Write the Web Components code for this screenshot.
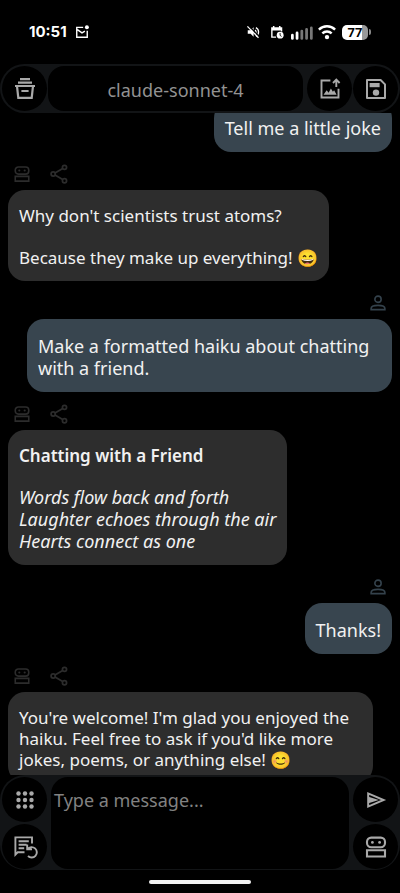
<!DOCTYPE html>
<html lang="en">
<head>
<meta charset="utf-8">
<meta name="viewport" content="width=device-width, initial-scale=1">
<title>Chat</title>
<style>
  html, body { height: 100%; }
  body { margin: 0; background: #000; color: #f1f1f1; font: 18px/22px "Noto Sans", sans-serif; }
</style>
</head>
<body>
<chat-app></chat-app>

<script>
const ICONS = {
  archive: '<path fill="none" stroke="currentColor" stroke-width="2.2" d="M2 9h20M4 9.2l1.3 11.7h13.4L20 9.2M5 5.6h14M7 2.2h10M8.4 14h7.2"/>',
  image: '<path fill="none" stroke="currentColor" stroke-width="1.9" d="M12.4 3.5H3.5v17h17v-8.7M18.3 10V3M15 6l3.3-3.3L21.6 6"/><path fill="currentColor" d="M5.5 17.8l3.2-4.6 1.9 2.6 2.3-4.2 2 3.1 1.2-1.5 2.5 4.6z"/>',
  save: '<path fill="none" stroke="currentColor" stroke-width="2" stroke-linejoin="round" d="M3 3h13.6L21 7.4V21H3z"/><path fill="currentColor" d="M5.6 6h10v4.2h-10z"/><circle cx="12" cy="15.6" r="3.2" fill="currentColor"/>',
  bot: '<path fill="none" stroke="currentColor" stroke-width="2.1" d="M3 15.2h18v6.3H3zM7.2 2.6h9.6a4.200 4.200 0 0 1 4.200 4.200v1.200a4.200 4.200 0 0 1-4.200 4.200H7.200A4.200 4.200 0 0 1 3 8V6.800a4.200 4.200 0 0 1 4.200-4.200z"/><circle cx="8.4" cy="7.4" r="1.4" fill="currentColor"/><circle cx="15.6" cy="7.4" r="1.4" fill="currentColor"/>',
  share: '<g fill="none" stroke="currentColor" stroke-width="2.1"><circle cx="18.6" cy="4" r="2.5"/><circle cx="5" cy="12" r="2.5"/><circle cx="18.6" cy="20" r="2.5"/><path d="M7.2 10.7l9.2-5.4M7.2 13.3l9.2 5.4"/></g>',
  person: '<g fill="none" stroke="currentColor" stroke-width="2.1"><circle cx="12" cy="7" r="4.2"/><path d="M2.8 20.8v-1.5c0-2.6 4.6-4.1 9.2-4.1s9.2 1.5 9.2 4.1v1.5z"/></g>',
  apps: '<g fill="currentColor"><circle cx="5.5" cy="5.5" r="2.2"/><circle cx="12" cy="5.5" r="2.2"/><circle cx="18.5" cy="5.5" r="2.2"/><circle cx="5.5" cy="12" r="2.2"/><circle cx="12" cy="12" r="2.2"/><circle cx="18.5" cy="12" r="2.2"/><circle cx="5.5" cy="18.5" r="2.2"/><circle cx="12" cy="18.5" r="2.2"/><circle cx="18.5" cy="18.5" r="2.2"/></g>',
  undo: '<path fill="none" stroke="currentColor" stroke-width="1.9" d="M19 8.5V2.4H2.4v17.2l2.3-2.3h6.8M5.6 6.2h10.2M5.6 9.7h8M5.6 13.2h5.6M14.2 9.4v4.8h4.8M14.6 14a5.2 5.2 0 1 1 .4 7"/>',
  send: '<path fill="none" stroke="currentColor" stroke-width="2" d="M4.2 5.4v13.2L19.6 12zM4.4 12h7M4.2 9.8l7.2 2.2-7.2 2.2"/>',
  mail: '<path fill="none" stroke="currentColor" stroke-width="2.4" d="M14 4H3v17h18V10M4 8l8 5.6 5-3"/><circle cx="20.4" cy="4" r="3.4" fill="currentColor"/>',
  mute: '<path fill="currentColor" d="M3 9h5l5-5v16l-5-5H3z"/><path fill="none" stroke="currentColor" stroke-width="2.2" d="M15.5 8.5a5 5 0 0 1 0 7M17 4.4a8.6 8.6 0 0 1 0 15.2"/><path stroke="#000" stroke-width="2.4" d="M4.6 1.2l18 18.4"/><path stroke="currentColor" stroke-width="2.2" d="M2.4 2.4l19 19.4"/>',
  calendar: '<path fill="currentColor" d="M2 4h3V1.5h2.6V4h7.8V1.5H18V4h3v7h-2.4V9.6H4.4v10.2h6V22H2z"/><circle cx="17.4" cy="17.4" r="5.9" fill="currentColor"/><path fill="none" stroke="#000" stroke-width="1.5" d="M17.3 13.8v4l2.5 1.8"/>',
  wifi: '<g fill="none" stroke="currentColor" stroke-width="3.2"><path d="M1.2 8.8a15.4 15.4 0 0 1 21.6 0"/><path d="M5.8 13.8a8.9 8.9 0 0 1 12.4 0"/></g><circle cx="12" cy="18.8" r="2.9" fill="currentColor"/>',
  signal: '<path stroke="currentColor" stroke-width="3" stroke-linecap="round" d="M1.5 15.5v3.5M6.6 13v6"/><path stroke="#777" stroke-width="3" stroke-linecap="round" d="M11.8 11v8M17 9v10M22.2 7.5V19"/>'
};

class UiIcon extends HTMLElement {
  connectedCallback() {
    const root = this.attachShadow({ mode: 'open' });
    root.innerHTML = `
      <style>
        :host { display: inline-flex; flex: none; width: var(--icon, 24px); height: var(--icon, 24px); }
        svg { width: 100%; height: 100%; overflow: visible; }
      </style>
      <svg viewBox="0 0 24 24" aria-hidden="true">${ICONS[this.getAttribute('name')]}</svg>`;
  }
}
customElements.define('ui-icon', UiIcon);

class RoundButton extends HTMLElement {
  connectedCallback() {
    const root = this.attachShadow({ mode: 'open' });
    root.innerHTML = `
      <style>
        :host { display: block; flex: none; }
        button { display: grid; place-items: center; width: 45px; height: 45px; padding: 0; border: 0;
          border-radius: 50%; background: #000; color: #a9a9a9; cursor: pointer; }
      </style>
      <button type="button" aria-label="${this.getAttribute('label')}"><ui-icon name="${this.getAttribute('icon')}"></ui-icon></button>`;
  }
}
customElements.define('round-button', RoundButton);

class StatusBar extends HTMLElement {
  connectedCallback() {
    const root = this.attachShadow({ mode: 'open' });
    root.innerHTML = `
      <style>
        :host { display: flex; align-items: center; justify-content: space-between; flex: none; height: 64px;
          padding: 0 29px; box-sizing: border-box; color: #fff; --icon: 14px; }
        div { display: flex; align-items: center; }
        .left { gap: 8px; }
        .right { gap: 10px; }
        time { font: 700 15px/20px Inter, sans-serif; }
        .signal { --icon: 22px; margin: 0 -4px 0 -3px; }
        .wifi { --icon: 18px; }
        .net { gap: 9px; }
        .battery { margin-left: -4px; }
        .level { width: 26px; height: 15px; border-radius: 5px; justify-content: center; color: #000;
          background: linear-gradient(90deg, #fff 77%, #999 77%); font: 700 13px/15px Roboto, sans-serif; }
        .tip { width: 2px; height: 6px; margin-left: 1px; border-radius: 0 2px 2px 0; background: #888; }
      </style>
      <div class="left"><time>10:51</time><ui-icon name="mail"></ui-icon></div>
      <div class="right">
        <ui-icon name="mute"></ui-icon>
        <ui-icon name="calendar"></ui-icon>
        <div class="net"><ui-icon class="signal" name="signal"></ui-icon><ui-icon class="wifi" name="wifi"></ui-icon></div>
        <div class="battery"><div class="level">77</div><div class="tip"></div></div>
      </div>`;
  }
}
customElements.define('status-bar', StatusBar);

class TopBar extends HTMLElement {
  connectedCallback() {
    const root = this.attachShadow({ mode: 'open' });
    root.innerHTML = `
      <style>
        :host { display: flex; flex: none; gap: 1px; padding: 2px; border-radius: 25px; background: #121416; }
        .model { flex: 1; min-width: 0; margin-right: 3px; padding: 3px 0 0; border: 0; border-radius: 16px;
          background: #000; color: #929292; font: inherit; cursor: pointer; }
      </style>
      <round-button icon="archive" label="Chats"></round-button>
      <button class="model" type="button"><slot></slot></button>
      <round-button icon="image" label="Add image"></round-button>
      <round-button icon="save" label="Save"></round-button>`;
  }
}
customElements.define('top-bar', TopBar);

class ChatMessage extends HTMLElement {
  connectedCallback() {
    const user = this.getAttribute('from') === 'user';
    const root = this.attachShadow({ mode: 'open' });
    root.innerHTML = `
      <style>
        :host { display: flex; flex-direction: column; align-items: flex-start; padding: 0 8px; }
        :host([from=user]) { align-items: flex-end; }
        .meta { display: flex; gap: 18px; height: 38px; padding: 11px 5px 5px; align-items: center; box-sizing: border-box;
          color: #2c2c2c; --icon: 18px; }
        :host([from=user]) .meta { color: #34424c; }
        .meta button { display: flex; padding: 0; border: 0; background: none; color: inherit; cursor: pointer; }
        .share { --icon: 20px; }
        .bubble { max-width: calc(100% - 19px); box-sizing: border-box; padding: 15px 11px 13px; border-radius: 17px;
          background: #2d2d2d; font-size: 17px; line-height: 21px; }
        :host([from=user]) .bubble { padding: 16px 11px 13px; background: #38454f; font-size: 18px; line-height: 22px; }
      </style>
      <div class="meta">${user
        ? '<ui-icon name="person"></ui-icon>'
        : '<ui-icon name="bot"></ui-icon><button class="share" type="button" aria-label="Share"><ui-icon name="share"></ui-icon></button>'}</div>
      <div class="bubble"><slot></slot></div>`;
  }
}
customElements.define('chat-message', ChatMessage);

class MessageComposer extends HTMLElement {
  connectedCallback() {
    const root = this.attachShadow({ mode: 'open' });
    root.innerHTML = `
      <style>
        :host { display: flex; flex: none; gap: 4px; padding: 2px 2px 1px; border-radius: 25px; background: #121416; }
        .column { display: flex; flex-direction: column; gap: 2px; }
        textarea { flex: 1; min-width: 0; box-sizing: border-box; padding: 12px 3px; border: 0; border-radius: 17px;
          background: #000; color: #f1f1f1; font: inherit; resize: none; outline: none; }
        textarea::placeholder { color: #828282; opacity: 1; }
      </style>
      <div class="column">
        <round-button icon="apps" label="Menu"></round-button>
        <round-button icon="undo" label="Undo message"></round-button>
      </div>
      <textarea aria-label="Message" placeholder="Type a message..."></textarea>
      <div class="column">
        <round-button icon="send" label="Send"></round-button>
        <round-button icon="bot" label="Assistant"></round-button>
      </div>`;
  }
}
customElements.define('message-composer', MessageComposer);

class ChatApp extends HTMLElement {
  connectedCallback() {
    const root = this.attachShadow({ mode: 'open' });
    root.innerHTML = `
      <style>
        :host { display: flex; flex-direction: column; height: 100vh; }
        main { flex: 1; min-height: 0; overflow-y: auto; scrollbar-width: none; padding-bottom: 48px; }
        footer { display: flex; flex: none; justify-content: center; padding: 10px 0 9px; }
        footer span { width: 102px; height: 4px; border-radius: 2px; background: #f2f2f2; }
        p { margin: 0; }
        p + p { margin-top: 21px; }
        strong { font-weight: 600; }
        p.verse { margin-top: 20px; font-size: 18px; line-height: 22px; font-style: italic; }
      </style>
      <status-bar></status-bar>
      <top-bar>claude-sonnet-4</top-bar>
      <main>
        <chat-message from="user"><p>Tell me a little joke</p></chat-message>
        <chat-message from="assistant"><p>Why don't scientists trust atoms?</p><p>Because they make up everything! 😄</p></chat-message>
        <chat-message from="user"><p>Make a formatted haiku about chatting with a friend.</p></chat-message>
        <chat-message from="assistant"><p><strong>Chatting with a Friend</strong></p><p class="verse">Words flow back and forth<br>Laughter echoes through the air<br>Hearts connect as one</p></chat-message>
        <chat-message from="user"><p>Thanks!</p></chat-message>
        <chat-message from="assistant"><p>You're welcome! I'm glad you enjoyed the haiku. Feel free to ask if you'd like more jokes, poems, or anything else! 😊</p></chat-message>
      </main>
      <message-composer></message-composer>
      <footer><span></span></footer>`;
    root.querySelector('main').scrollTop = 50;
  }
}
customElements.define('chat-app', ChatApp);
</script>
</body>
</html>
